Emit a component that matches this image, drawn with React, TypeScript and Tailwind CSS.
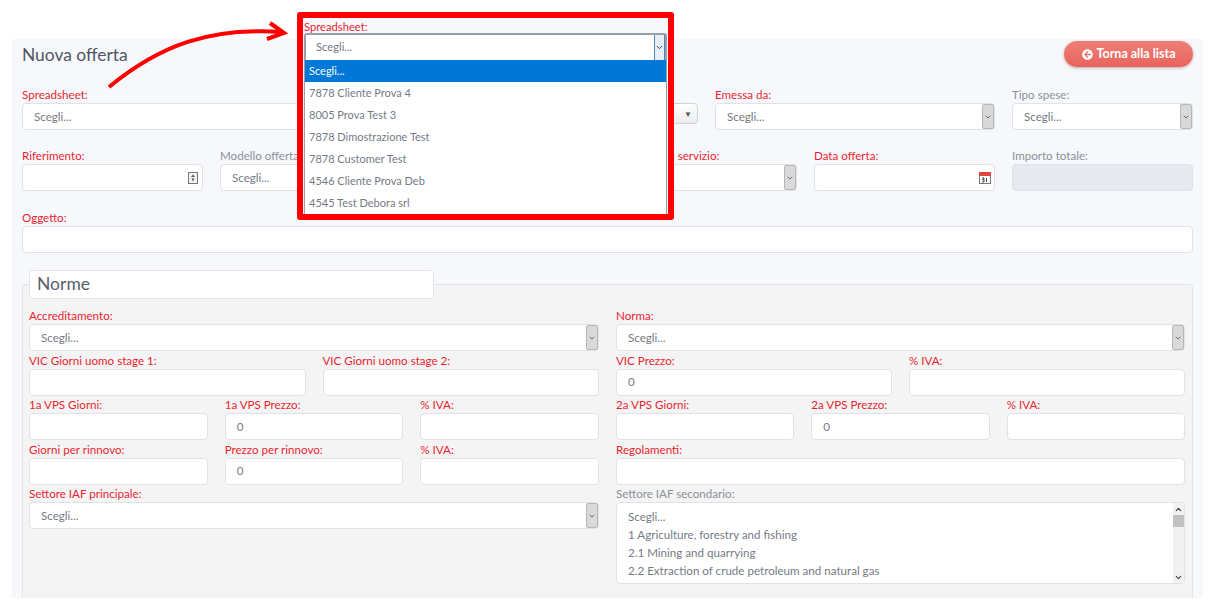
import { ChevronDown, ChevronUp } from "lucide-react";
import { FaArrowCircleLeft } from "react-icons/fa";

const Label = ({ text, muted }: { text: string; muted?: boolean }) => (
  <div className={`h-[16px] text-[11.6px] leading-[15px] whitespace-nowrap ${muted ? "text-[#8b919b]" : "text-[#ea1f2e]"}`}>
    {text}
  </div>
);

const Input = ({ value, className = "" }: { value?: string; className?: string }) => (
  <div className={`flex items-center rounded-[4px] border border-[#dfe2e8] bg-white pl-[11px] text-[11.6px] text-[#757b85] ${className}`}>
    {value}
  </div>
);

const SelectBox = ({ className = "" }: { className?: string }) => (
  <div className={`flex items-center justify-between rounded-[4px] border border-[#dfe2e8] bg-white pl-[11px] text-[11.6px] text-[#757b85] ${className}`}>
    <span>Scegli...</span>
    <span className="flex h-full w-[12px] items-center justify-center rounded-[2px] border border-[#b5b7bb] bg-[#d9d9d9] text-[#555]">
      <ChevronDown size={8} strokeWidth={2.5} />
    </span>
  </div>
);

const Field = ({ label, muted, value, select }: { label: string; muted?: boolean; value?: string; select?: boolean }) => (
  <div>
    <Label text={label} muted={muted} />
    {select ? <SelectBox className="h-[27px]" /> : <Input value={value} className="h-[27px]" />}
  </div>
);

const SpinIcon = () => (
  <svg width="10" height="12" viewBox="0 0 10 12" className="absolute right-[5px] top-[24px]">
    <rect x="0.5" y="0.5" width="9" height="11" fill="#f2f2f2" stroke="#777" />
    <path d="M5 2.5 7 5H3z M5 9.5 3.5 6.5h3z" fill="#555" />
  </svg>
);

const CalendarIcon = () => (
  <svg width="12" height="12" viewBox="0 0 12 12" className="absolute right-[4px] top-[24px]">
    <rect x="0.5" y="0.5" width="11" height="11" fill="#fff" stroke="#777" />
    <rect x="0" y="0" width="12" height="4" fill="#e0453f" />
    <path d="M3 6h2v1.2H3.8v.6H5V10H3 M7.5 6v4" fill="none" stroke="#444" />
  </svg>
);

const options = [
  "7878 Cliente Prova 4",
  "8005 Prova Test 3",
  "7878 Dimostrazione Test",
  "7878 Customer Test",
  "4546 Cliente Prova Deb",
  "4545 Test Debora srl",
];

export default function App() {
  return (
    <div className="relative h-[608px] w-[1211px] overflow-hidden bg-white font-['Lato',sans-serif]">
      <div className="ml-[12px] mt-[39px] h-[559px] w-[1191px] overflow-hidden bg-[#f7f8fc] px-[10px]">
        <div className="flex items-start justify-between pt-[2px]">
          <h1 className="pt-[1px] text-[17.4px] leading-[26px] text-[#4f5663]">Nuova offerta</h1>
          <button className="flex h-[26px] w-[129px] items-center justify-center gap-[4px] rounded-full bg-gradient-to-b from-[#ee7f75] to-[#e9635e] text-[12.5px] font-bold text-white shadow-[0_1px_3px_rgba(120,40,40,0.4)]">
            <FaArrowCircleLeft size={11} />
            Torna alla lista
          </button>
        </div>

        <div className="mt-[19px] grid grid-cols-12 gap-x-[17px]">
          <div className="col-span-4">
            <Field label="Spreadsheet:" value="Scegli..." />
          </div>
          <div className="col-span-3">
            <div className="h-[16px]" />
            <div className="flex h-[21px] items-center justify-end rounded-[4px] border border-[#cfd2d8] bg-gradient-to-b from-white to-[#ececec] pr-[5px] text-[8px] text-[#555]">
              ▼
            </div>
          </div>
          <div className="col-span-3">
            <Field label="Emessa da:" select />
          </div>
          <div className="col-span-2">
            <Field label="Tipo spese:" muted select />
          </div>
        </div>

        <div className="mt-[18px] grid grid-cols-12 gap-x-[17px]">
          <div className="relative col-span-2">
            <Field label="Riferimento:" />
            <SpinIcon />
          </div>
          <div className="col-span-2">
            <Field label="Modello offerta:" muted value="Scegli..." />
          </div>
          <div className="col-span-2" />
          <div className="col-span-2">
            <Field label="Tipologia di servizio:" select />
          </div>
          <div className="relative col-span-2">
            <Field label="Data offerta:" />
            <CalendarIcon />
          </div>
          <div className="col-span-2">
            <Label text="Importo totale:" muted />
            <div className="h-[27px] rounded-[4px] border border-[#dfe2e8] bg-[#e6e9ef]" />
          </div>
        </div>

        <div className="mt-[19px]">
          <Field label="Oggetto:" />
        </div>

        <div className="mt-[31px] h-[400px] rounded-t-[4px] border border-[#e2e4e8] bg-[#f4f4f5] px-[6px]">
          <div className="-mt-[15px] flex h-[29px] w-[405px] items-center rounded-[4px] border border-[#e3e5ea] bg-white pl-[7px] text-[17.5px] text-[#5a606b]">
            Norme
          </div>
          <div className="mt-[9px] grid grid-cols-[570px_569px] gap-x-[17px]">
            <div className="flex flex-col gap-y-[1.5px]">
              <Field label="Accreditamento:" select />
              <div className="grid grid-cols-2 gap-x-[17px]">
                <Field label="VIC Giorni uomo stage 1:" />
                <Field label="VIC Giorni uomo stage 2:" />
              </div>
              <div className="grid grid-cols-3 gap-x-[17px]">
                <Field label="1a VPS Giorni:" />
                <Field label="1a VPS Prezzo:" value="0" />
                <Field label="% IVA:" />
              </div>
              <div className="grid grid-cols-3 gap-x-[17px]">
                <Field label="Giorni per rinnovo:" />
                <Field label="Prezzo per rinnovo:" value="0" />
                <Field label="% IVA:" />
              </div>
              <Field label="Settore IAF principale:" select />
            </div>
            <div className="flex flex-col gap-y-[1.5px]">
              <Field label="Norma:" select />
              <div className="grid grid-cols-2 gap-x-[17px]">
                <Field label="VIC Prezzo:" value="0" />
                <Field label="% IVA:" />
              </div>
              <div className="grid grid-cols-3 gap-x-[17px]">
                <Field label="2a VPS Giorni:" />
                <Field label="2a VPS Prezzo:" value="0" />
                <Field label="% IVA:" />
              </div>
              <Field label="Regolamenti:" />
              <div>
                <Label text="Settore IAF secondario:" muted />
                <div className="flex h-[82px] justify-between rounded-[4px] border border-[#dfe2e8] bg-white">
                  <div className="pl-[11px] pt-[5px] text-[11.6px] leading-[18px] text-[#757b85]">
                    <div>Scegli...</div>
                    <div>1 Agriculture, forestry and fishing</div>
                    <div>2.1 Mining and quarrying</div>
                    <div>2.2 Extraction of crude petroleum and natural gas</div>
                  </div>
                  <div className="flex w-[11px] flex-col items-center justify-between bg-[#f1f1f1] text-[#444]">
                    <div className="w-full">
                      <div className="flex h-[12px] items-center justify-center">
                        <ChevronUp size={9} strokeWidth={3} />
                      </div>
                      <div className="h-[12px] w-full bg-[#c1c1c1]" />
                    </div>
                    <div className="flex h-[12px] items-center justify-center">
                      <ChevronDown size={9} strokeWidth={3} />
                    </div>
                  </div>
                </div>
              </div>
            </div>
          </div>
        </div>
      </div>

      {/* arrow pointing at the highlighted select */}
      <svg width="200" height="80" viewBox="0 0 200 80" className="absolute left-[100px] top-[15px]">
        <path d="M9 72 C 60 30, 110 12, 182 17" fill="none" stroke="#f00" strokeWidth="4" />
        <path d="M170 8 L184 18 L167 24" fill="none" stroke="#f00" strokeWidth="4" />
      </svg>

      {/* red highlight frame */}
      <div className="absolute left-[297px] top-[12px] h-[208px] w-[377px] overflow-hidden rounded-[3px] border-[6px] border-[#f00] bg-[#f7f8fc]">
        <div className="pl-[1px] pt-[2px] text-[11.2px] leading-[13px] text-[#ea1f2e]">Spreadsheet:</div>
        <div className="ml-[1px] flex h-[27px] w-[363px] items-center justify-between rounded-t-[3px] border-2 border-b-0 border-[#9aa0a8] bg-white pl-[10px] text-[11.2px] text-[#757b85]">
          <span>Scegli...</span>
          <span className="flex h-full w-[11px] items-center justify-center border-x border-[#4a86b8] bg-[#e6eef7] text-[#333]">
            <ChevronDown size={9} strokeWidth={2.5} />
          </span>
        </div>
        <div className="ml-[1px] h-[154px] w-[363px] overflow-hidden border-x border-[#9aa0a8] bg-white text-[11px] text-[#757b85]">
          <div className="flex h-[22px] items-center bg-[#0078d7] pl-[4px] text-white">Scegli...</div>
          {options.map((o) => (
            <div key={o} className="flex h-[22px] items-center pl-[4px]">
              {o}
            </div>
          ))}
        </div>
      </div>
    </div>
  );
}
